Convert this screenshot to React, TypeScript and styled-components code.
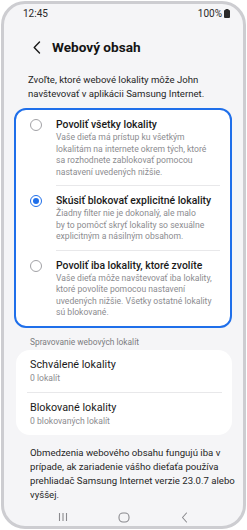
import React from 'react'
import styled, { createGlobalStyle } from 'styled-components'

const GlobalStyle = createGlobalStyle`
  html, body {
    margin: 0;
    padding: 0;
    background: #ffffff;
  }
  body {
    font-family: Roboto, "Noto Sans", "Liberation Sans", sans-serif;
    color: #1c1c1e;
    -webkit-font-smoothing: antialiased;
  }
`

const Phone = styled.div`
  box-sizing: border-box;
  width: 245px;
  height: 528px;
  margin: 1px;
  border: 3px solid #cdcdd1;
  border-radius: 24px;
  background: #f5f5f7;
  overflow: hidden;
  display: flex;
  flex-direction: column;
`

const StatusBar = styled.div`
  height: 18px;
  padding: 0 13px 0 19px;
  display: flex;
  align-items: center;
  justify-content: space-between;
  font-size: 10px;
  color: #2a2a2a;
`

const Battery = styled.span`
  display: flex;
  align-items: center;
  gap: 2px;
`

const Header = styled.div`
  height: 30px;
  margin-top: 10px;
  padding-left: 29px;
  display: flex;
  align-items: center;
  gap: 11px;
`

const Title = styled.h1`
  margin: 0;
  font-size: 13.6px;
  font-weight: 700;
  color: #141414;
`

const Intro = styled.p`
  margin: 11px 0 0;
  padding: 0 20px 0 24px;
  font-size: 9.6px;
  line-height: 14px;
  color: #262626;
`

const SelectCard = styled.div`
  margin: 7px 11px 0 10px;
  border: 2px solid #1f6fea;
  border-radius: 12px;
  background: #ffffff;
`

const Option = styled.div`
  display: flex;
  align-items: flex-start;
  gap: 14px;
  padding: 8px 10px 7px 14px;
`

const Radio = styled.span<{ $checked?: boolean }>`
  box-sizing: border-box;
  flex: none;
  width: 12px;
  height: 12px;
  margin-top: 1px;
  border-radius: 50%;
  border: 1.3px solid ${p => (p.$checked ? '#1f6fea' : '#a2a2a6')};
  display: flex;
  align-items: center;
  justify-content: center;
  &::after {
    content: '';
    display: ${p => (p.$checked ? 'block' : 'none')};
    width: 6px;
    height: 6px;
    border-radius: 50%;
    background: #1f6fea;
  }
`

const OptionText = styled.div`
  display: flex;
  flex-direction: column;
`

const OptionTitle = styled.div`
  font-size: 10.4px;
  font-weight: 500;
  line-height: 14px;
  color: #1a1a1a;
  white-space: nowrap;
`

const OptionDesc = styled.div`
  font-size: 8.6px;
  line-height: 11.5px;
  color: #8c8c90;
  white-space: nowrap;
`

const Divider = styled.div<{ $inset: number }>`
  height: 1px;
  background: #e8e8ea;
  margin: 0 10px 0 ${p => p.$inset}px;
`

const SectionLabel = styled.div`
  margin: 8px 0 0;
  padding-left: 26px;
  font-size: 8.4px;
  line-height: 12px;
  color: #7c7c80;
`

const ListCard = styled.div`
  margin: 2px 11px 0 12px;
  border-radius: 14px;
  background: #ffffff;
`

const ListRow = styled.div`
  padding: 8px 14px;
`

const RowTitle = styled.div`
  font-size: 10.8px;
  line-height: 14px;
  color: #1a1a1a;
`

const RowSub = styled.div`
  font-size: 8.6px;
  line-height: 12px;
  color: #8c8c90;
`

const Footer = styled.p`
  margin: 11px 0 0;
  padding-left: 26px;
  font-size: 9.6px;
  line-height: 14px;
  color: #262626;
  white-space: nowrap;
`

const NavBar = styled.div`
  margin-top: auto;
  height: 18px;
  display: grid;
  grid-template-columns: repeat(3, 61px);
  justify-content: center;
  align-items: center;
  justify-items: center;
`

const options = [
  {
    title: 'Povoliť všetky lokality',
    desc: [
      'Vaše dieťa má prístup ku všetkým',
      'lokalitám na internete okrem tých, ktoré',
      'sa rozhodnete zablokovať pomocou',
      'nastavení uvedených nižšie.',
    ],
    checked: false,
  },
  {
    title: 'Skúsiť blokovať explicitné lokality',
    desc: [
      'Žiadny filter nie je dokonalý, ale malo',
      'by to pomôcť skryť lokality so sexuálne',
      'explicitným a násilným obsahom.',
    ],
    checked: true,
  },
  {
    title: 'Povoliť iba lokality, ktoré zvolíte',
    desc: [
      'Vaše dieťa môže navštevovať iba lokality,',
      'ktoré povolíte pomocou nastavení',
      'uvedených nižšie. Všetky ostatné lokality',
      'sú blokované.',
    ],
    checked: false,
  },
]

const rows = [
  { title: 'Schválené lokality', sub: '0 lokalít' },
  { title: 'Blokované lokality', sub: '0 blokovaných lokalít' },
]

export default function App() {
  return (
    <>
      <GlobalStyle />
      <Phone>
        <StatusBar>
          <span>12:45</span>
          <Battery>
            100%
            <svg width="6" height="9" viewBox="0 0 6 9">
              <rect x="1.5" y="0" width="3" height="1.2" fill="#2a2a2a" />
              <rect x="0" y="1" width="6" height="8" rx="1" fill="#2a2a2a" />
            </svg>
          </Battery>
        </StatusBar>

        <Header>
          <svg width="8" height="13" viewBox="0 0 8 13">
            <path d="M6.5 1 L1.2 6.5 L6.5 12" fill="none" stroke="#1a1a1a" strokeWidth="1.4" strokeLinecap="round" strokeLinejoin="round" />
          </svg>
          <Title>Webový obsah</Title>
        </Header>

        <Intro>
          Zvoľte, ktoré webové lokality môže John
          <br />
          navštevovať v aplikácii Samsung Internet.
        </Intro>

        <SelectCard>
          {options.map((o, i) => (
            <React.Fragment key={o.title}>
              {i > 0 && <Divider $inset={40} />}
              <Option>
                <Radio $checked={o.checked} />
                <OptionText>
                  <OptionTitle>{o.title}</OptionTitle>
                  {o.desc.map(line => (
                    <OptionDesc key={line}>{line}</OptionDesc>
                  ))}
                </OptionText>
              </Option>
            </React.Fragment>
          ))}
        </SelectCard>

        <SectionLabel>Spravovanie webových lokalít</SectionLabel>

        <ListCard>
          {rows.map((r, i) => (
            <React.Fragment key={r.title}>
              {i > 0 && <Divider $inset={11} />}
              <ListRow>
                <RowTitle>{r.title}</RowTitle>
                <RowSub>{r.sub}</RowSub>
              </ListRow>
            </React.Fragment>
          ))}
        </ListCard>

        <Footer>
          Obmedzenia webového obsahu fungujú iba v
          <br />
          prípade, ak zariadenie vášho dieťaťa používa
          <br />
          prehliadač Samsung Internet verzie 23.0.7 alebo
          <br />
          vyššej.
        </Footer>

        <NavBar>
          <svg width="10" height="10" viewBox="0 0 10 10">
            <path d="M1.5 1 V9 M5 1 V9 M8.5 1 V9" stroke="#8a8a8e" strokeWidth="1.1" />
          </svg>
          <svg width="12" height="11" viewBox="0 0 12 11">
            <rect x="1" y="1" width="10" height="9" rx="4" fill="none" stroke="#8a8a8e" strokeWidth="1.1" />
          </svg>
          <svg width="7" height="11" viewBox="0 0 7 11">
            <path d="M5.5 1 L1.5 5.5 L5.5 10" fill="none" stroke="#8a8a8e" strokeWidth="1.1" strokeLinecap="round" strokeLinejoin="round" />
          </svg>
        </NavBar>
      </Phone>
    </>
  )
}
